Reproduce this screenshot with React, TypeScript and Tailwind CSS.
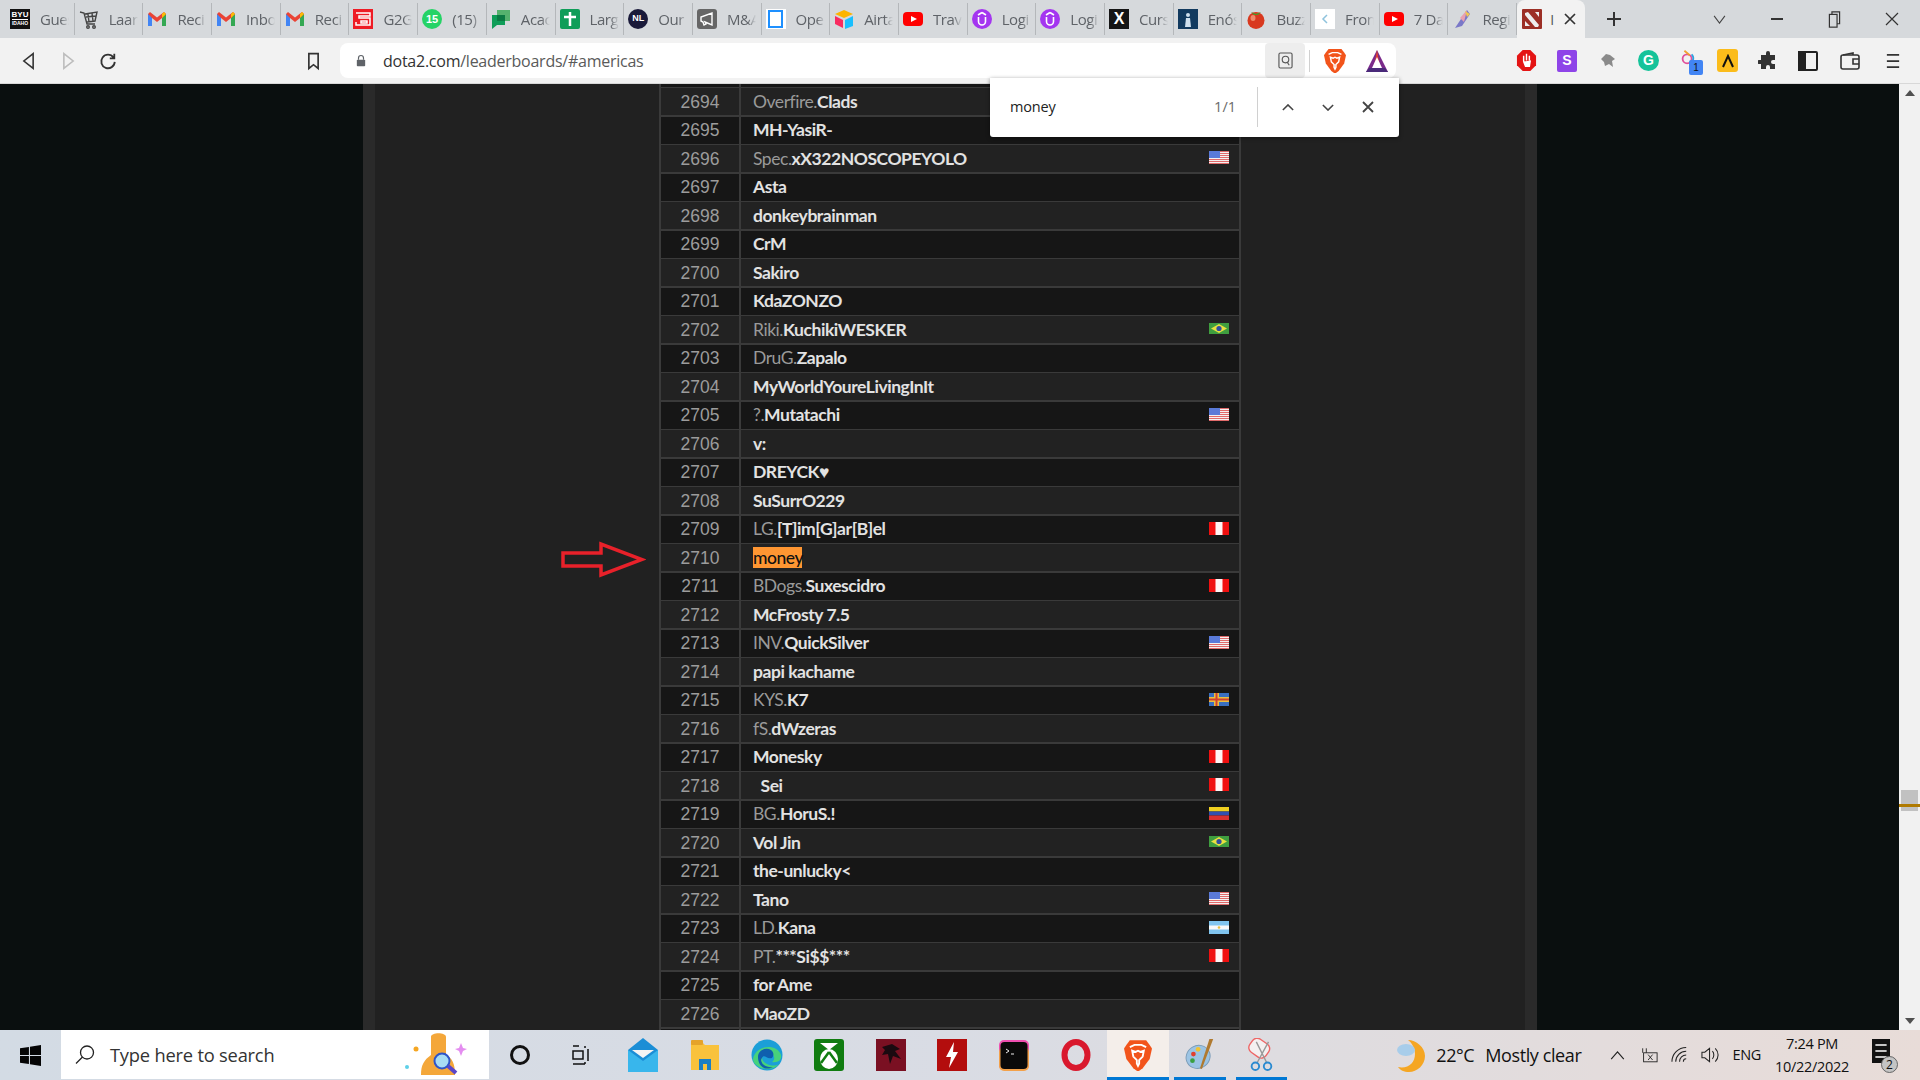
import React from "react";

type Flag = "us" | "br" | "pe" | "ax" | "ve" | "ar";
type Row = { n: number; p?: string; b: string; f?: Flag };

const rows: Row[] = [
  { n: 2694, p: "Overfire.", b: "Clads" }, { n: 2695, b: "MH-YasiR-" },
  { n: 2696, p: "Spec.", b: "xX322NOSCOPEYOLO", f: "us" }, { n: 2697, b: "Asta" },
  { n: 2698, b: "donkeybrainman" }, { n: 2699, b: "CrM" }, { n: 2700, b: "Sakiro" },
  { n: 2701, b: "KdaZONZO" }, { n: 2702, p: "Riki.", b: "KuchikiWESKER", f: "br" },
  { n: 2703, p: "DruG.", b: "Zapalo" }, { n: 2704, b: "MyWorldYoureLivingInIt" },
  { n: 2705, p: "?.", b: "Mutatachi", f: "us" }, { n: 2706, b: "v:" }, { n: 2707, b: "DREYCK♥" },
  { n: 2708, b: "SuSurrO229" }, { n: 2709, p: "LG.", b: "[T]im[G]ar[B]el", f: "pe" },
  { n: 2710, b: "money" }, { n: 2711, p: "BDogs.", b: "Suxescidro", f: "pe" },
  { n: 2712, b: "McFrosty 7.5" }, { n: 2713, p: "INV.", b: "QuickSilver", f: "us" },
  { n: 2714, b: "papi kachame" }, { n: 2715, p: "KYS.", b: "K7", f: "ax" },
  { n: 2716, p: "fS.", b: "dWzeras" }, { n: 2717, b: "Monesky", f: "pe" },
  { n: 2718, b: "  Sei", f: "pe" }, { n: 2719, p: "BG.", b: "HoruS.!", f: "ve" },
  { n: 2720, b: "Vol Jin", f: "br" }, { n: 2721, b: "the-unlucky<" }, { n: 2722, b: "Tano", f: "us" },
  { n: 2723, p: "LD.", b: "Kana", f: "ar" }, { n: 2724, p: "PT.", b: "***Si$$***", f: "pe" },
  { n: 2725, b: "for Ame" }, { n: 2726, b: "MaoZD" },
];

function FlagIcon({ f }: { f: Flag }) {
  const c = "w-[20px] h-[13px] shrink-0 mb-[2px]";
  if (f === "us")
    return (
      <svg className={c} viewBox="0 0 20 13">
        <rect width="20" height="13" fill="#f4f0f0" />
        {[0, 2, 4, 6, 8, 10, 12].map((y) => <rect key={y} y={y} width="20" height="1" fill="#e06a6a" />)}
        <rect width="11" height="7" fill="#5a7ad8" />
      </svg>
    );
  if (f === "br")
    return (
      <svg className={c} viewBox="0 0 20 13">
        <rect y="1" width="20" height="11" fill="#3f9e3f" />
        <polygon points="10,2 18,6.5 10,11 2,6.5" fill="#e8e040" />
        <circle cx="10" cy="6.5" r="2.6" fill="#2f4f9f" />
      </svg>
    );
  if (f === "pe")
    return (
      <svg className={c} viewBox="0 0 20 13">
        <rect width="20" height="13" fill="#f01010" />
        <rect x="6.5" width="7" height="13" fill="#fff4f4" />
      </svg>
    );
  if (f === "ax")
    return (
      <svg className={c} viewBox="0 0 20 13">
        <rect width="20" height="13" fill="#3a6fc0" />
        <rect x="5" width="5" height="13" fill="#e8c040" />
        <rect y="4" width="20" height="5" fill="#e8c040" />
        <rect x="6.5" width="2" height="13" fill="#d04030" />
        <rect y="5.5" width="20" height="2" fill="#d04030" />
      </svg>
    );
  if (f === "ve")
    return (
      <svg className={c} viewBox="0 0 20 13">
        <rect width="20" height="4.5" fill="#f0d020" />
        <rect y="4.5" width="20" height="4" fill="#3050b0" />
        <rect y="8.5" width="20" height="4.5" fill="#d83030" />
      </svg>
    );
  return (
    <svg className={c} viewBox="0 0 20 13">
      <rect width="20" height="13" fill="#80c4ee" />
      <rect y="4.5" width="20" height="4" fill="#f8f8f8" />
      <circle cx="10" cy="6.5" r="1.3" fill="#e8c040" />
    </svg>
  );
}

function TableRow({ r }: { r: Row }) {
  const bg = r.n % 2 === 0 ? "bg-[#222222]" : "bg-[#161616]";
  return (
    <div className="flex h-[27px] gap-[2px] shrink-0">
      <div className={`w-[78px] flex items-center justify-center text-[17.5px] text-[#9c9c9c] ${bg} [font-family:'Liberation_Sans',sans-serif]`}>
        {r.n}
      </div>
      <div className={`flex-1 flex items-center pl-[12px] pr-[10px] text-[17.5px] whitespace-pre tracking-[-0.45px] ${bg} [font-family:'Lato',sans-serif]`}>
        {r.n === 2710 ? (
          <span className="bg-[#ff9632] text-[#111] font-medium h-[21px] flex items-center w-[49px]">money</span>
        ) : (
          <>
            {r.p && <span className="text-[#9a9a9a] font-normal">{r.p}</span>}
            <span className="text-[#e2e2e2] font-bold">{r.b}</span>
          </>
        )}
        <span className="flex-1" />
        {r.f && <FlagIcon f={r.f} />}
      </div>
    </div>
  );
}

/* ---------- tab favicons ---------- */
const Gmail = () => (
  <svg viewBox="0 0 20 20" className="w-[20px] h-[20px]">
    <path d="M1 5v12h4V9l5 4 5-4v8h4V5l-2-2-7 5.500L3 3z" fill="#ea4335" />
    <path d="M1 5v12h4V9z" fill="#4285f4" />
    <path d="M15 9v8h4V5z" fill="#34a853" />
    <path d="M17 3l2 2-4 4V5z" fill="#fbbc04" />
  </svg>
);
const YT = () => (
  <svg viewBox="0 0 20 20" className="w-[20px] h-[20px]">
    <rect x="0" y="3" width="20" height="14" rx="4" fill="#f00" />
    <polygon points="8,7 14,10 8,13" fill="#fff" />
  </svg>
);
const Ud = () => (
  <svg viewBox="0 0 20 20" className="w-[20px] h-[20px]">
    <circle cx="10" cy="10" r="10" fill="#a435f0" />
    <path d="M6.500 8v4.500a3.500 3.500 0 0 0 7 0V8M10 3.500l4 2.500M10 3.500L6 6" fill="none" stroke="#fff" strokeWidth="1.600" />
  </svg>
);

const favicons: React.ReactNode[] = [
  <div className="w-[20px] h-[20px] bg-[#111] flex flex-col items-center justify-center text-white font-bold text-[8px] leading-[8px] [font-family:'Liberation_Sans',sans-serif]"><span>BYU</span><span className="text-[5px] leading-[7px] border-t border-white">IDAHO</span></div>,
  <svg viewBox="0 0 20 20" className="w-[20px] h-[20px]" fill="none" stroke="#444" strokeWidth="1.400"><path d="M1 3l4 1 3 11h8M6 5l12-2-2 9-8 1M9 5l1 8M13 4l1 8M7 8l10-1" /><circle cx="9" cy="18" r="1.300" /><circle cx="15" cy="18" r="1.300" /></svg>,
  <Gmail />,
  <Gmail />,
  <Gmail />,
  <svg viewBox="0 0 20 20" className="w-[20px] h-[20px]"><rect width="20" height="20" fill="#ee1c25" /><path d="M3 4h14v3H6v2h11v7H3v-3M8 12h6v2H8z" fill="none" stroke="#fff" strokeWidth="1.500" /></svg>,
  <div className="w-[20px] h-[20px] rounded-full bg-[#25d366] flex items-center justify-center text-white font-bold text-[11px] [font-family:'Liberation_Sans',sans-serif]">15</div>,
  <svg viewBox="0 0 20 20" className="w-[20px] h-[20px]"><path d="M1 6h13v10H6l-5 4z" fill="#0f9d58" /><rect x="6" y="1" width="13" height="11" fill="#34a853" opacity="0.8" /><rect x="6" y="6" width="8" height="6" fill="#0b7a43" /></svg>,
  <svg viewBox="0 0 20 20" className="w-[20px] h-[20px]"><rect width="20" height="20" rx="2" fill="#0f9d58" /><path d="M10 3v14M4 8h12" stroke="#fff" strokeWidth="2.500" /></svg>,
  <div className="w-[20px] h-[20px] rounded-full bg-[#1a1a3a] flex items-center justify-center text-white text-[9px] font-bold [font-family:'Liberation_Sans',sans-serif]">NL</div>,
  <svg viewBox="0 0 20 20" className="w-[20px] h-[20px]"><rect width="20" height="20" rx="3" fill="#666" /><path d="M4 8v4l2 1 1 3 2-1-1-2 7 3V4z" fill="none" stroke="#fff" strokeWidth="1.400" /></svg>,
  <div className="w-[20px] h-[20px] bg-white flex items-center justify-center"><div className="w-[15px] h-[18px] border-2 border-[#1e90ff]" /></div>,
  <svg viewBox="0 0 20 20" className="w-[20px] h-[20px]"><polygon points="10,1 19,5 10,9 1,5" fill="#fcb400" /><polygon points="11,11 19,7 19,17 11,20" fill="#18bfff" /><polygon points="1,7 9,11 9,19 1,15" fill="#f82b60" /></svg>,
  <YT />,
  <Ud />,
  <Ud />,
  <div className="w-[20px] h-[20px] bg-[#151515] flex items-center justify-center text-white font-bold text-[16px] [font-family:'Liberation_Sans',sans-serif]">X</div>,
  <svg viewBox="0 0 20 20" className="w-[20px] h-[20px]"><rect width="20" height="20" fill="#123a5f" /><circle cx="10" cy="6" r="2" fill="#cfe0ee" /><path d="M8 9h4l1 9H7z" fill="#cfe0ee" /></svg>,
  <svg viewBox="0 0 20 20" className="w-[20px] h-[20px]"><circle cx="10" cy="11.500" r="8.500" fill="#d8391f" /><ellipse cx="7" cy="9" rx="2.500" ry="3" fill="#ee8a6a" /><path d="M5 3l5 2 5-2-3 3H8z" fill="#4c9a2a" /></svg>,
  <svg viewBox="0 0 20 20" className="w-[20px] h-[20px]"><rect width="20" height="20" fill="#fff" /><path d="M12 6l-4 4 4 4" fill="none" stroke="#8fc3dd" strokeWidth="1.500" /></svg>,
  <YT />,
  <svg viewBox="0 0 20 20" className="w-[20px] h-[20px]"><path d="M3 19L15 1l3 4-8 12z" fill="#7a78c8" /><path d="M8 9L15 1l-3 12z" fill="#e8a0b0" /><path d="M13 2l5 3-3 3z" fill="#f0c850" /></svg>,
  <svg viewBox="0 0 20 20" className="w-[20px] h-[20px]"><rect width="20" height="20" rx="1" fill="#9c2f26" /><path d="M3 4l3-1 11 13-1 2h-3L3 6zM13 3h4v5zM3 12l5 5H3z" fill="#eee" /></svg>,
];
const titles = ["Gues", "Laar", "Reci", "Inbo", "Reci", "G2G", "(15)", "Acac", "Larg", "Our", "M&A", "Ope", "Airta", "Trav", "Logi", "Logi", "Curs", "Enós", "Buzz", "Fron", "7 Da", "Regi"];

function TabStrip() {
  return (
    <div className="h-[38px] bg-[#d6d9dc] flex items-stretch pl-[6px] shrink-0">
      {titles.map((t, i) => (
        <div key={i} className="w-[68.7px] shrink-0 flex items-center pl-[4px] gap-[10px] overflow-hidden border-r border-[#b4b7ba] my-[3px] box-border">
          <div className="w-[20px] h-[20px] shrink-0">{favicons[i]}</div>
          <span className="w-[29px] shrink-0 overflow-hidden text-[15px] text-[#5f6368] whitespace-pre tracking-[-0.4px] [font-family:'Open_Sans',sans-serif] [mask-image:linear-gradient(to_right,black_70%,transparent)]">{t}</span>
        </div>
      ))}
      <div className="w-[68px] shrink-0 bg-[#f2f2f2] rounded-t-lg flex items-center pl-[5px] mt-[0px]">
        <div className="w-[20px] h-[20px] shrink-0">{favicons[22]}</div>
        <span className="ml-[8px] text-[#555] text-[14px] [font-family:'Open_Sans',sans-serif]">I</span>
        <svg viewBox="0 0 12 12" className="w-[12px] h-[12px] ml-[10px]" stroke="#333" strokeWidth="1.700"><path d="M1 1l10 10M11 1L1 11" /></svg>
      </div>
      <div className="w-[26px] ml-[16px] flex items-center justify-center">
        <svg viewBox="0 0 16 16" className="w-[16px] h-[16px]" stroke="#333" strokeWidth="2"><path d="M8 1v14M1 8h14" /></svg>
      </div>
      <div className="flex-1 flex items-center justify-end">
        <svg viewBox="0 0 14 10" className="w-[13px] h-[9px] mr-[45px]" fill="none" stroke="#444" strokeWidth="1.200"><path d="M1 1l6 8 6-8" /></svg>
        <div className="w-[12px] h-[1.500px] bg-[#333] mr-[45px]" />
        <svg viewBox="0 0 14 20" className="w-[13px] h-[17px] mr-[44px]" fill="none" stroke="#333" strokeWidth="1.400"><rect x="1" y="4" width="9" height="15" /><path d="M4 4V1h9v14h-3" /></svg>
        <svg viewBox="0 0 14 14" className="w-[14px] h-[14px] mr-[21.500px]" stroke="#333" strokeWidth="1.200"><path d="M1 1l12 12M13 1L1 13" /></svg>
      </div>
    </div>
  );
}

function BraveIcon({ size }: { size: number }) {
  return (
    <svg viewBox="0 0 24 28" style={{ width: size, height: size * 1.17 }}>
      <path d="M5 1h14l3 4 2 3-2 9-6 8-4 3-4-3-6-8L0 8l2-3z" fill="#f2541b" />
      <path d="M7 10l3 1 2-1 2 1 3-1-1 5-3 3v3l-1 2-1-2v-3l-3-3zM5 7l4-2h6l4 2" fill="none" stroke="#fff" strokeWidth="1.600" />
    </svg>
  );
}

function Toolbar() {
  return (
    <div className="h-[46px] bg-[#f2f2f2] flex items-center shrink-0 border-b border-[#d8d8d8]">
      <svg viewBox="0 0 14 20" className="w-[13px] h-[20px] ml-[22px]" fill="none" stroke="#333" strokeWidth="1.700"><path d="M12 2L2 10l10 8z" /></svg>
      <svg viewBox="0 0 14 20" className="w-[13px] h-[20px] ml-[27px]" fill="none" stroke="#bcbcbc" strokeWidth="1.700"><path d="M2 2l10 8-10 8z" /></svg>
      <svg viewBox="0 0 20 20" className="w-[18px] h-[20px] ml-[24px]" fill="none" stroke="#333" strokeWidth="2"><path d="M16 6a7.500 7.500 0 1 0 1.500 5M17 2v5h-5" /></svg>
      <svg viewBox="0 0 14 20" className="w-[13px] h-[20px] ml-[190px]" fill="none" stroke="#333" strokeWidth="1.800"><path d="M2 2h10v16l-5-4-5 4z" /></svg>
      <div className="ml-[20px] w-[1056px] h-[35px] bg-white rounded-l-[8px] rounded-r-[8px] flex items-center">
        <svg viewBox="0 0 12 14" className="w-[10px] h-[13px] ml-[16px]" fill="#5f6368"><rect x="1" y="6" width="10" height="8" rx="1" /><path d="M3 6V4a3 3 0 0 1 6 0v2" fill="none" stroke="#5f6368" strokeWidth="1.400" /></svg>
        <span className="ml-[17px] text-[16px] text-[#5a5a5a] tracking-[-0.25px] [font-family:'Open_Sans',sans-serif]">
          <span className="text-[#333]">dota2.com</span>/leaderboards/#americas
        </span>
        <span className="flex-1" />
        <div className="w-[40px] h-[35px] mr-[1px] bg-[#ededed] rounded-[4px] flex items-center justify-center">
          <svg viewBox="0 0 16 18" className="w-[15px] h-[17px]" fill="none" stroke="#555" strokeWidth="1.200"><rect x="1" y="1" width="14" height="16" rx="1.500" /><circle cx="8" cy="8" r="3.500" /><path d="M10 11l2 3" /></svg>
        </div>
        <div className="w-px h-[22px] bg-[#d0d0d0] ml-[3px]" />
        <div className="ml-[14px]"><BraveIcon size={22} /></div>
        <svg viewBox="0 0 24 24" className="w-[24px] h-[24px] ml-[19px] mr-[7px]"><path d="M12 1L23 23H1z" fill="#7a2a8a" /><path d="M12 1L16 23H8z" fill="#e04030" /><path d="M12 8L17 19H7z" fill="#fff" /><path d="M1 23h22l-3-4H4z" fill="#4a2a7a" /></svg>
      </div>
      <div className="ml-[120px] flex items-center">
        <svg viewBox="0 0 22 24" className="w-[21px] h-[23px]"><polygon points="7,1 15,1 21,7 21,17 15,23 7,23 1,17 1,7" fill="#e41414" /><path d="M8 13V7M11 12V5M14 12V7M8 13l2 5h4l1-6" stroke="#fff" strokeWidth="1.500" fill="#fff" /></svg>
        <div className="ml-[20px] w-[20px] h-[22px] bg-[#8e44e8] rounded-[2px] flex items-center justify-center text-white font-bold text-[14px] [font-family:'Liberation_Sans',sans-serif]">S</div>
        <svg viewBox="0 0 20 20" className="w-[20px] h-[20px] ml-[21px]" fill="#8a8a8a"><path d="M3 8l5-5 4 1 5 4-3 2 1 6-4-3-4 2-1-4z" /></svg>
        <div className="ml-[20px] w-[21px] h-[21px] rounded-full bg-[#15c39a] flex items-center justify-center text-white font-bold text-[14px] [font-family:'Liberation_Sans',sans-serif]">G</div>
        <div className="ml-[20px] w-[24px] h-[28px] relative">
          <svg viewBox="0 0 20 20" className="w-[18px] h-[20px]" fill="none" strokeWidth="2"><circle cx="9" cy="12" r="5" stroke="#e0509a" /><path d="M6 3l6 5" stroke="#f0a030" /><path d="M14 7a6 6 0 0 1-2 10" stroke="#30a0e0" /></svg>
          <div className="absolute right-0 bottom-0 w-[14px] h-[15px] bg-[#4285f4] rounded-[2px] flex items-center justify-center text-[10px] text-[#111] [font-family:'Liberation_Sans',sans-serif]">1</div>
        </div>
        <div className="ml-[14px] w-[21px] h-[23px] bg-[#fbbc1b] rounded-[3px] flex items-center justify-center">
          <svg viewBox="0 0 14 14" className="w-[14px] h-[14px]" fill="none" stroke="#111" strokeWidth="2"><path d="M2 13L7 2l5 11" /></svg>
        </div>
        <svg viewBox="0 0 20 20" className="w-[20px] h-[20px] ml-[20px]" fill="#333"><path d="M8 2a2 2 0 0 1 4 0v2h5v5h-2a2 2 0 0 0 0 4h2v5h-5v-2a2 2 0 0 0-4 0v2H3v-5H1a2 2 0 0 1 0-4h2V4h5z" /></svg>
        <svg viewBox="0 0 20 20" className="w-[20px] h-[20px] ml-[20px]" fill="none" stroke="#222" strokeWidth="2"><rect x="1" y="1" width="18" height="18" rx="1" /><rect x="1" y="1" width="6" height="18" fill="#222" /></svg>
        <svg viewBox="0 0 20 20" className="w-[20px] h-[20px] ml-[22px]" fill="none" stroke="#333" strokeWidth="1.600"><rect x="1" y="4" width="18" height="14" rx="2" /><path d="M3 4l10-2v2M19 8h-6v5h6" /></svg>
        <svg viewBox="0 0 16 18" className="w-[14px] h-[18px] ml-[26px]" stroke="#333" strokeWidth="2"><path d="M1 2h14M1 9h14M1 16h14" /></svg>
      </div>
    </div>
  );
}

function Page() {
  return (
    <div className="relative flex-1 min-h-0 flex bg-[#0a0f0f]">
      <div className="w-[363px] shrink-0" />
      <div className="w-[12px] shrink-0 bg-[#2a2a2a]" />
      <div className="w-[284px] shrink-0 bg-[#212121]" />
      <div className="w-[582px] shrink-0 bg-[#3a3a3a] px-[2px] flex flex-col gap-[1.500px] overflow-hidden">
        <div className="h-[2.800px] shrink-0 flex gap-[2px]"><div className="w-[78px] bg-[#161616]" /><div className="flex-1 bg-[#161616]" /></div>
        {rows.map((r) => <TableRow key={r.n} r={r} />)}
        <div className="h-[3px] shrink-0 flex gap-[2px]"><div className="w-[78px] bg-[#161616]" /><div className="flex-1 bg-[#161616]" /></div>
      </div>
      <div className="w-[284px] shrink-0 bg-[#212121]" />
      <div className="w-[12px] shrink-0 bg-[#2a2a2a]" />
      <div className="flex-1" />
      <div className="relative w-[21px] shrink-0 bg-[#f1f1f1] flex flex-col justify-between items-center py-[6px]">
        <div className="w-0 h-0 border-x-[5px] border-x-transparent border-b-[6px] border-b-[#505050]" />
        <div className="w-0 h-0 border-x-[5px] border-x-transparent border-t-[6px] border-t-[#505050]" />
        <div className="absolute left-[2px] top-[706px] w-[17px] h-[21px] bg-[#c1c1c1]" />
        <div className="absolute left-0 top-[720px] w-[21px] h-[2.500px] bg-[#b07a00]" />
      </div>

      {/* annotation arrow */}
      <svg viewBox="0 0 85 37" className="absolute left-[561px] top-[457px] w-[85px] h-[37px]" fill="none" stroke="#e8212a" strokeWidth="3.500">
        <path d="M2 12h38V3l41 15.500L40 34v-9H2z" />
      </svg>

      {/* find bar */}
      <div className="absolute left-[990px] top-[-6px] w-[409px] h-[59px] bg-white rounded-b-[3px] shadow-[0_1px_4px_rgba(0,0,0,0.45)] flex items-center pb-[1px] [font-family:'Open_Sans',sans-serif]">
        <span className="ml-[20px] text-[14.500px] text-[#222] tracking-[-0.2px]">money</span>
        <span className="flex-1" />
        <span className="text-[14.500px] text-[#6a6a6a]">1/1</span>
        <div className="w-px h-[40px] bg-[#d0d0d0] ml-[21px]" />
        <svg viewBox="0 0 14 8" className="w-[12px] h-[7px] ml-[24px]" fill="none" stroke="#444" strokeWidth="1.800"><path d="M1 7l6-6 6 6" /></svg>
        <svg viewBox="0 0 14 8" className="w-[12px] h-[7px] ml-[28px]" fill="none" stroke="#444" strokeWidth="1.800"><path d="M1 1l6 6 6-6" /></svg>
        <svg viewBox="0 0 12 12" className="w-[12px] h-[12px] ml-[28px] mr-[25px]" stroke="#444" strokeWidth="1.800"><path d="M1 1l10 10M11 1L1 11" /></svg>
      </div>
    </div>
  );
}

const taskIcons: React.ReactNode[] = [
  <div className="w-[20px] h-[20px] rounded-full border-[3.500px] border-[#111]" />,
  <svg viewBox="0 0 20 20" className="w-[20px] h-[20px]" fill="none" stroke="#111" strokeWidth="1.500"><path d="M1 1h6M1 19h12M1 6h10v8H1zM13 1v2M16 4v12M13 17v2" /></svg>,
  <svg viewBox="0 0 30 34" className="w-[30px] h-[34px]"><path d="M0 12L15 0l15 12v22H0z" fill="#1b8ed6" /><path d="M4 12h22L15 20z" fill="#f4f4f4" /><path d="M0 12l15 11 15-11v22H0z" fill="#38b6ec" /></svg>,
  <svg viewBox="0 0 30 32" className="w-[30px] h-[32px]"><path d="M1 3h11l3 3h14v25H1z" fill="#f9c23c" /><rect x="1" y="1" width="12" height="5" rx="1" fill="#e5a32a" /><path d="M9 31V20h12v11h-4v-6h-4v6z" fill="#1b7fc4" /></svg>,
  <svg viewBox="0 0 32 32" className="w-[32px] h-[32px]"><circle cx="16" cy="16" r="15.500" fill="#1b9fd8" /><path d="M2 20C4 6 26 4 30 16c1 5-3 8-9 7 5-4 1-10-5-9-6 0-7 8 0 11 4 2 9 2 12 0-4 5-13 7-20 3-4-2-6-5-6-8z" fill="#47d27c" /><path d="M7 18c0-7 8-10 13-7 4 3 2 7 1 8-6 2-8-6-11 2 1 6 7 8 12 7-7 4-15 0-15-10z" fill="#0f5fae" /></svg>,
  <svg viewBox="0 0 30 32" className="w-[30px] h-[32px]"><rect width="30" height="32" rx="3" fill="#107c10" /><ellipse cx="15" cy="20" rx="9" ry="10" fill="#fff" /><path d="M15 13l-8 11M15 13l8 11" stroke="#107c10" strokeWidth="2.500" /><path d="M6 4h18l-9 7z" fill="#fff" /></svg>,
  <svg viewBox="0 0 30 32" className="w-[30px] h-[32px]"><rect width="30" height="32" fill="#7a1022" /><path d="M6 8l10-3 8 5-5 2 6 8-8-3-3 8-2-10-6 1 3-5z" fill="#1a0a10" /></svg>,
  <svg viewBox="0 0 30 32" className="w-[30px] h-[32px]"><rect width="30" height="32" fill="#b30d0d" /><polygon points="17,3 9,18 14,18 12,29 21,13 16,13" fill="#fff" /></svg>,
  <svg viewBox="0 0 30 32" className="w-[30px] h-[32px]"><rect y="1" width="30" height="30" rx="5" fill="#ef4fb0" /><rect y="8" width="30" height="24" rx="5" fill="#f3a14a" /><rect x="1.500" y="3" width="27" height="27" rx="4" fill="#0a0a0a" /><path d="M7 10l3 2-3 2M12 15h3" stroke="#eee" fill="none" strokeWidth="1" /></svg>,
  <svg viewBox="0 0 30 32" className="w-[30px] h-[32px]"><ellipse cx="15" cy="16" rx="11.500" ry="13" fill="none" stroke="#d9182d" strokeWidth="6" /></svg>,
  <BraveIcon size={28} />,
  <svg viewBox="0 0 34 36" className="w-[32px] h-[34px]"><ellipse cx="15" cy="20" rx="13" ry="12" transform="rotate(-30 15 20)" fill="#9cc4e4" stroke="#7a9cb8" /><circle cx="10" cy="17" r="2.500" fill="#e04030" /><circle cx="15" cy="12" r="2.500" fill="#f2c230" /><circle cx="9" cy="24" r="2.500" fill="#3aa040" /><path d="M31 1l-12 32-2-1 10-31z" fill="#b07a30" /></svg>,
  <svg viewBox="0 0 32 36" className="w-[30px] h-[34px]" fill="none"><rect x="4" y="2" width="21" height="17" rx="6" transform="rotate(35 14 10)" stroke="#e66" strokeWidth="1.500" fill="#f4f0f0" /><path d="M11 4l11 22M24 4L12 26" stroke="#999" strokeWidth="1.500" /><circle cx="10" cy="30" r="4" stroke="#2a8ad0" strokeWidth="2" /><circle cx="23" cy="30" r="4" stroke="#2a8ad0" strokeWidth="2" /></svg>,
];

function Taskbar() {
  return (
    <div className="h-[50px] shrink-0 bg-gradient-to-r from-[#d3dbe4] via-[#d9dce4] to-[#e8dcd8] flex items-stretch text-[#111] [font-family:'Open_Sans',sans-serif]">
      <div className="w-[61px] shrink-0 flex items-center justify-center">
        <svg viewBox="0 0 20 20" className="w-[21px] h-[21px]" fill="#050505"><path d="M0 3l8.500-1.200v7.700H0zM9.500 1.700L20 0v9.500H9.500zM0 10.500h8.500v7.700L0 17zM9.500 10.500H20V20L9.500 18.300z" /></svg>
      </div>
      <div className="w-[428px] shrink-0 bg-white flex items-center mb-[1px]">
        <svg viewBox="0 0 20 20" className="w-[20px] h-[21px] ml-[14px]" fill="none" stroke="#222" strokeWidth="1.300"><circle cx="12" cy="8" r="6.500" /><path d="M7.500 12.500L1 19" /></svg>
        <span className="ml-[15px] text-[18.300px] text-[#333] tracking-[-0.2px]">Type here to search</span>
        <span className="flex-1" />
        <svg viewBox="0 0 64 44" className="w-[64px] h-[44px] mr-[20px]">
          <circle cx="11" cy="16" r="2.500" fill="#f5a623" /><circle cx="2" cy="34" r="2" fill="#5ed0e8" />
          <path d="M56 10l2 5 4 1-4 2-2 5-2-5-4-2 4-1z" fill="#e48df0" />
          <path d="M26 4c0-5 15-5 15 0v18c6 3 9 8 9 20H16c0-10 3-15 10-20z" fill="#f4a73a" />
          <circle cx="37" cy="28" r="7.500" fill="#a8dcf4" stroke="#2f55c8" strokeWidth="2" />
          <path d="M43 33l8 7" stroke="#5a46c8" strokeWidth="4" />
        </svg>
      </div>
      {taskIcons.map((ic, i) => {
        const active = i >= 10;
        return (
          <div key={i} className={`w-[61.800px] shrink-0 relative flex items-center justify-center ${i === 10 ? "bg-[#f4eeea]" : ""}`}>
            {ic}
            {active && <div className={`absolute bottom-0 h-[3px] bg-[#0078d4] ${i === 10 ? "left-0 right-0" : "left-[5px] right-[5px]"}`} />}
          </div>
        );
      })}
      <div className="flex-1 flex items-center justify-end pr-[28px]">
        <svg viewBox="0 0 30 36" className="w-[30px] h-[36px]"><path d="M12 3c8 0 17 7 17 16s-8 16-16 16c-5 0-9-2-11-5 10 2 17-4 17-13 0-6-3-11-7-14z" fill="#f5a623" /><ellipse cx="10" cy="13" rx="9" ry="6" fill="#a8cdea" /></svg>
        <span className="ml-[10px] text-[18px] tracking-[-0.4px]">22°C</span>
        <span className="ml-[11px] text-[18px] tracking-[-0.4px] mr-[29px]">Mostly clear</span>
        <svg viewBox="0 0 16 10" className="w-[15px] h-[9px]" fill="none" stroke="#222" strokeWidth="1.300"><path d="M1 9l7-8 7 8" /></svg>
        <svg viewBox="0 0 20 18" className="w-[18px] h-[17px] ml-[15px]" fill="none" stroke="#222" strokeWidth="1"><rect x="4" y="6" width="15" height="10" /><path d="M9 8l5 6M14 8l-5 6M3 1v5M7 1v5" /></svg>
        <svg viewBox="0 0 20 18" className="w-[19px] h-[18px] ml-[13px]" fill="none" stroke="#222" strokeWidth="1.100"><path d="M1 16a15 15 0 0 1 15-15M5 16a11 11 0 0 1 11-11M9 16a7 7 0 0 1 7-7M13 16a3 3 0 0 1 3-3" /></svg>
        <svg viewBox="0 0 20 18" className="w-[19px] h-[18px] ml-[11px]" fill="none" stroke="#222" strokeWidth="1.100"><path d="M1 6h3l5-4v14l-5-4H1zM12 5c2 2 2 6 0 8M15 2c4 4 4 10 0 14" /></svg>
        <span className="ml-[12px] text-[14.500px] tracking-[-0.3px]">ENG</span>
        <div className="ml-[13px] w-[76px] flex flex-col items-center text-[14.500px] leading-[23px] tracking-[-0.3px]">
          <span>7:24 PM</span>
          <span>10/22/2022</span>
        </div>
        <div className="relative ml-[22px] w-[20px] h-[32px]">
          <svg viewBox="0 0 16 16" className="w-[18px] h-[24px]" preserveAspectRatio="none"><path d="M0 0h16v16H0z" fill="#111" /><path d="M3 4h10M3 8h10M3 12h10" stroke="#fff" /></svg>
          <div className="absolute right-[-6px] bottom-[-2px] w-[17px] h-[17px] rounded-full bg-[#c4c4c4] border border-[#666] flex items-center justify-center text-[12px] leading-none">2</div>
        </div>
      </div>
    </div>
  );
}

export default function App() {
  return (
    <div className="w-[1920px] h-[1080px] flex flex-col overflow-hidden bg-[#0a0f0f]">
      <TabStrip />
      <Toolbar />
      <Page />
      <Taskbar />
    </div>
  );
}
